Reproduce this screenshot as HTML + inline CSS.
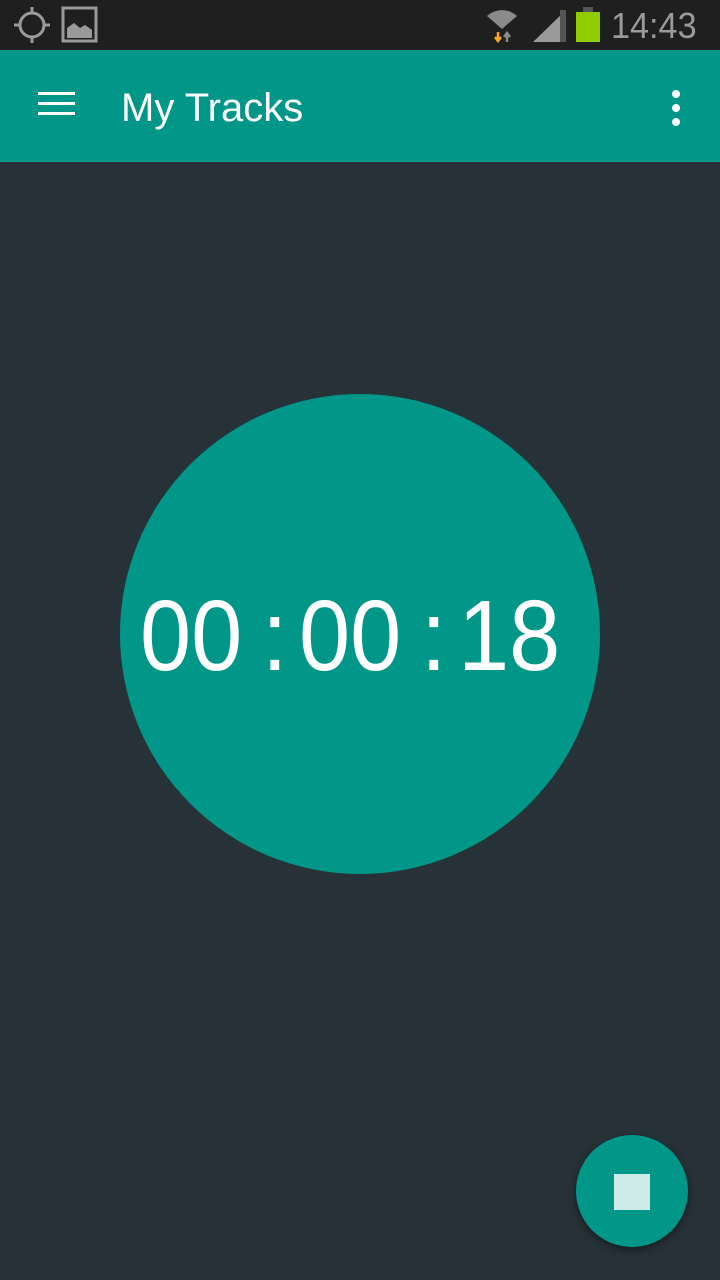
<!DOCTYPE html>
<html><head><style>
body{margin:0;width:720px;height:1280px;background:#263238;position:relative;overflow:hidden;font-family:"Liberation Sans",sans-serif}
.sb{position:absolute;left:0;top:0;width:720px;height:50px;background:#1f1f1f}
.tb{position:absolute;left:0;top:50px;width:720px;height:112px;background:#009688}
.t{position:absolute;color:#fff;white-space:nowrap}
.circ{position:absolute;left:120px;top:394px;width:480px;height:480px;border-radius:50%;background:#009688}
.d{position:absolute;top:584px;color:#fff;font-size:100px;line-height:104px;transform:scaleX(0.92);transform-origin:left top}
.fab{position:absolute;left:576px;top:1135px;width:112px;height:112px;border-radius:50%;background:#009688;box-shadow:0 3px 8px rgba(0,0,0,.45)}
</style></head><body>
<div class="sb">
<svg width="720" height="50" style="position:absolute;left:0;top:0">
<circle cx="32" cy="25" r="12" fill="none" stroke="#9a9a9a" stroke-width="3"/>
<path d="M32 7v7M32 36v7M14 25h7M43 25h7" stroke="#9a9a9a" stroke-width="3"/>
<rect x="63" y="8" width="33" height="33" fill="none" stroke="#9a9a9a" stroke-width="3"/>
<path d="M67 38V28l7-5 6 5 5-3 7 5v8z" fill="#9a9a9a"/>
<path d="M487 16a22 22 0 0 1 30 0l-15 13z" fill="#8a8a8a"/>
<path d="M498 32v8M495 37l3 4 3-4" stroke="#f5a623" stroke-width="2.5" fill="none"/>
<path d="M507 42v-8M504 37l3-4 3 4" stroke="#8a8a8a" stroke-width="2.5" fill="none"/>
<path d="M533 42L566 10V42z" fill="#9a9a9a"/>
<path d="M560 10h6v32h-6z" fill="#555"/>
<rect x="583" y="7" width="10" height="6" fill="#555"/>
<rect x="576" y="12" width="24" height="30" fill="#8fcc00"/>
</svg>
<div class="t" style="left:611px;top:5px;font-size:36px;color:#9a9a9a;transform:scaleX(0.95);transform-origin:left">14:43</div>
</div>
<div class="tb">
<div style="position:absolute;left:38px;top:42px;width:37px;height:3px;background:#fff"></div>
<div style="position:absolute;left:38px;top:52px;width:37px;height:3px;background:#fff"></div>
<div style="position:absolute;left:38px;top:62px;width:37px;height:3px;background:#fff"></div>
<div class="t" style="left:121px;top:36px;font-size:40px">My Tracks</div>
<div style="position:absolute;left:672px;top:40px;width:8px;height:8px;border-radius:50%;background:#fff"></div>
<div style="position:absolute;left:672px;top:54px;width:8px;height:8px;border-radius:50%;background:#fff"></div>
<div style="position:absolute;left:672px;top:68px;width:8px;height:8px;border-radius:50%;background:#fff"></div>
</div>
<div class="circ"></div>
<div class="d" style="left:140px">00</div>
<div class="d" style="left:262px">:</div>
<div class="d" style="left:299px">00</div>
<div class="d" style="left:421px">:</div>
<div class="d" style="left:458px">18</div>
<div class="fab"><div style="position:absolute;left:38px;top:39px;width:36px;height:36px;background:#cdeae8"></div></div>
</body></html>
